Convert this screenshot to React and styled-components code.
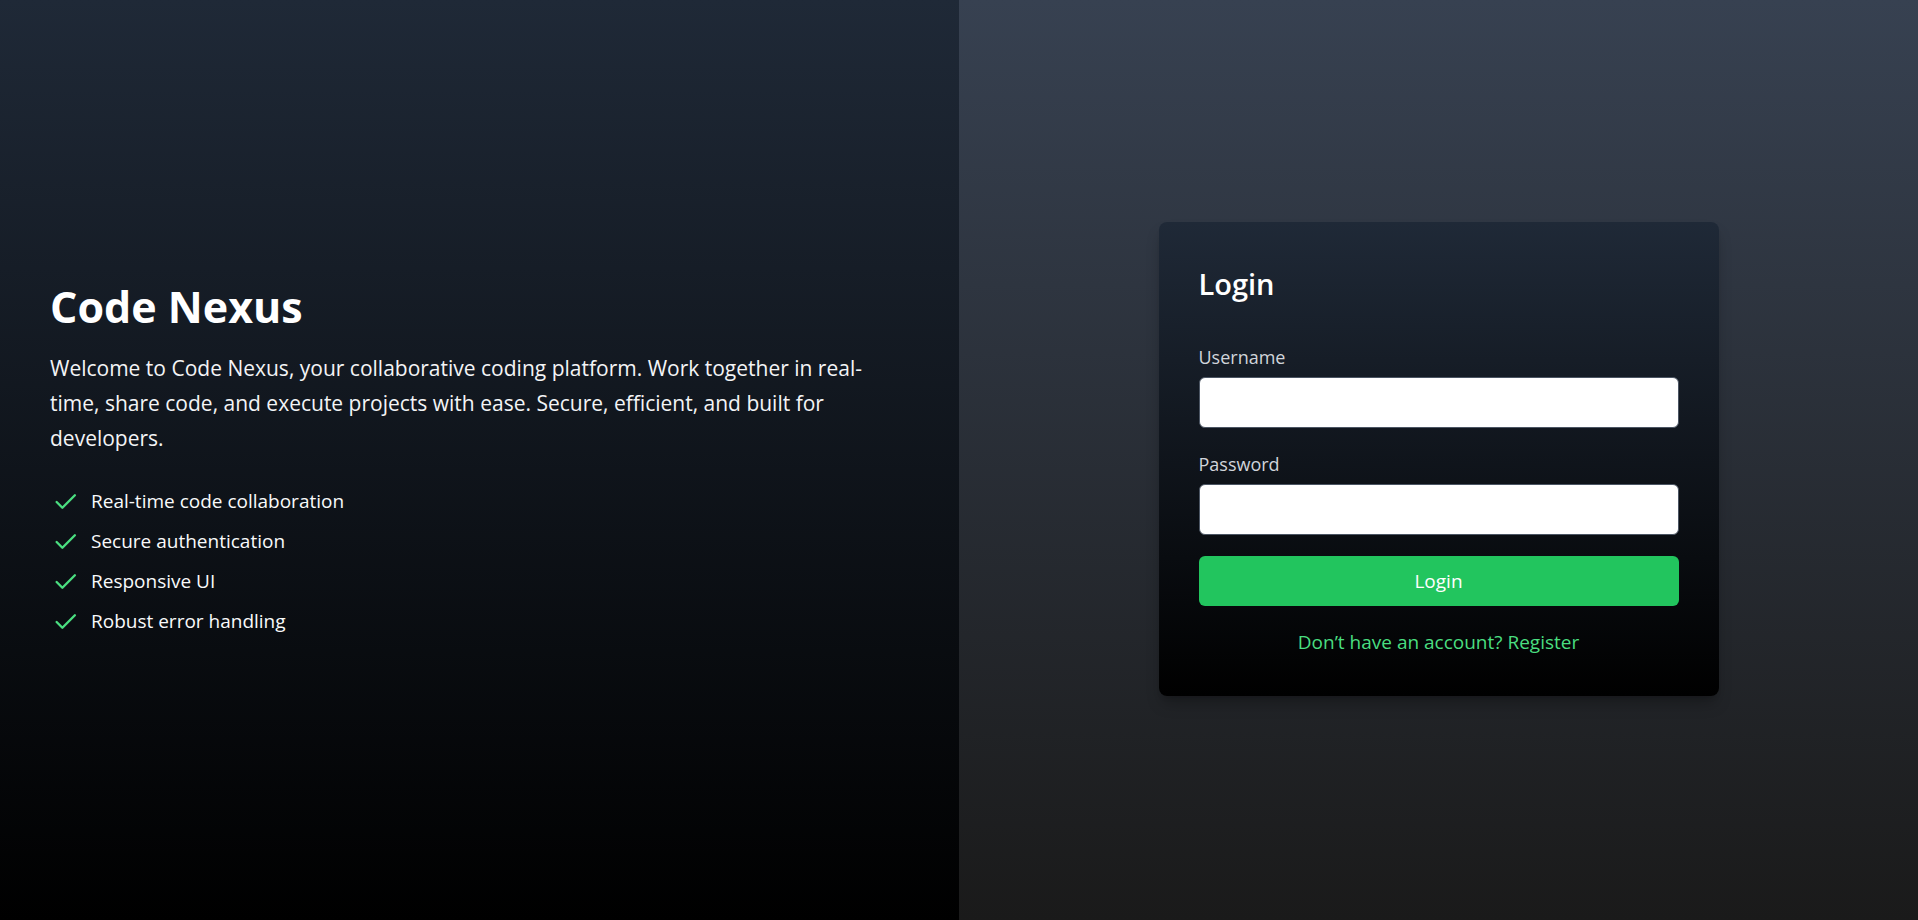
import React from "react";
import styled, { createGlobalStyle } from "styled-components";

const GlobalStyle = createGlobalStyle`
  html, body, #root {
    margin: 0;
    padding: 0;
    height: 100%;
  }
  body {
    font-family: "Open Sans", "Noto Sans", "Liberation Sans", sans-serif;
    background: #000;
    -webkit-font-smoothing: antialiased;
  }
  * { box-sizing: border-box; }
`;

const Page = styled.div`
  display: grid;
  grid-template-columns: 1fr 1fr;
  min-height: 100vh;
`;

const InfoPanel = styled.section`
  background: linear-gradient(to bottom, #1f2937, #000000);
  display: flex;
  flex-direction: column;
  justify-content: center;
  padding: 2px 50px 0;
  color: #fff;
`;

const Title = styled.h1`
  margin: 0 0 18px;
  font-size: 43px;
  line-height: 52px;
  font-weight: 700;
  color: #ffffff;
`;

const Intro = styled.p`
  margin: 0 0 25px;
  font-size: 21px;
  line-height: 35px;
  color: #f3f4f6;
`;

const FeatureList = styled.ul`
  list-style: none;
  margin: 0;
  padding: 0;
  display: flex;
  flex-direction: column;
`;

const FeatureItem = styled.li`
  display: flex;
  align-items: center;
  gap: 13px;
  height: 40px;
  font-size: 19px;
  color: #f9fafb;
  padding-left: 3px;
`;

const CheckSvg = styled.svg`
  width: 25px;
  height: 25px;
  flex-shrink: 0;
  color: #4ade80;
`;

const CheckIcon = () => (
  <CheckSvg viewBox="0 0 24 24" fill="none" stroke="currentColor" strokeWidth="2.3" strokeLinecap="round" strokeLinejoin="round">
    <path d="M3.5 12.5 9 18 21 6" />
  </CheckSvg>
);

const AuthPanel = styled.section`
  background: linear-gradient(to bottom, #374151, #1a1a1a);
  display: flex;
  align-items: center;
  justify-content: center;
`;

const Card = styled.form`
  width: 560px;
  padding: 40px;
  margin-top: -2px;
  border-radius: 8px;
  background: linear-gradient(to bottom, #1f2937, #000000);
  box-shadow: 0 10px 15px -3px rgba(0, 0, 0, 0.25), 0 4px 6px -4px rgba(0, 0, 0, 0.2);
  display: flex;
  flex-direction: column;
`;

const CardTitle = styled.h2`
  margin: 0 0 39px;
  font-size: 29px;
  line-height: 44px;
  font-weight: 600;
  color: #ffffff;
`;

const Field = styled.div`
  display: flex;
  flex-direction: column;
  margin-bottom: ${(p) => p.$gap}px;
`;

const Label = styled.label`
  font-size: 18px;
  line-height: 24px;
  color: #d1d5db;
  margin-bottom: 8px;
`;

const Input = styled.input`
  height: 51px;
  width: 100%;
  border: 1px solid #4b5563;
  border-radius: 6px;
  background: #ffffff;
  padding: 0 14px;
  font-size: 18px;
  font-family: inherit;
  outline: none;
`;

const SubmitButton = styled.button`
  height: 50px;
  width: 100%;
  border: none;
  border-radius: 6px;
  background: #22c55e;
  color: #ffffff;
  font-family: inherit;
  font-size: 19px;
  cursor: pointer;
`;

const Footer = styled.p`
  margin: 22px 0 0;
  text-align: center;
  font-size: 19px;
  line-height: 28px;
`;

const RegisterLink = styled.a`
  color: #4ade80;
  text-decoration: none;
`;

const features = [
  "Real-time code collaboration",
  "Secure authentication",
  "Responsive UI",
  "Robust error handling",
];

export default function App() {
  return (
    <>
      <GlobalStyle />
      <Page>
        <InfoPanel>
          <Title>Code Nexus</Title>
          <Intro>
            Welcome to Code Nexus, your collaborative coding platform. Work together in real-time,
            share code, and execute projects with ease. Secure, efficient, and built for developers.
          </Intro>
          <FeatureList>
            {features.map((f) => (
              <FeatureItem key={f}>
                <CheckIcon />
                {f}
              </FeatureItem>
            ))}
          </FeatureList>
        </InfoPanel>
        <AuthPanel>
          <Card onSubmit={(e) => e.preventDefault()}>
            <CardTitle>Login</CardTitle>
            <Field $gap={24}>
              <Label htmlFor="username">Username</Label>
              <Input id="username" type="text" />
            </Field>
            <Field $gap={21}>
              <Label htmlFor="password">Password</Label>
              <Input id="password" type="password" />
            </Field>
            <SubmitButton type="submit">Login</SubmitButton>
            <Footer>
              <RegisterLink href="#">Don’t have an account? Register</RegisterLink>
            </Footer>
          </Card>
        </AuthPanel>
      </Page>
    </>
  );
}
